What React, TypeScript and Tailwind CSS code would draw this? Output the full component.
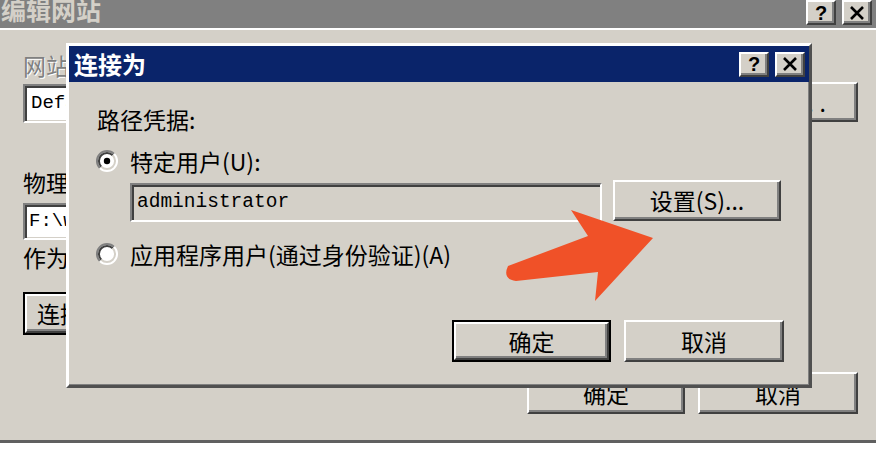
import React from 'react';

const font = { fontFamily: '"Noto Sans CJK SC", "Noto Sans", sans-serif' };

const raised =
  'border-2 border-t-white border-l-white border-r-[#404040] border-b-[#404040] shadow-[inset_-2px_-2px_0_#808080] bg-[#d4d0c8]';
const sunken =
  'border-2 border-t-[#808080] border-l-[#808080] border-r-white border-b-white shadow-[inset_2px_2px_0_#404040,inset_-1px_-1px_0_#d4d0c8]';

function Radio({ checked }: { checked?: boolean }) {
  return (
    <svg width="24" height="24" viewBox="0 0 24 24" className="shrink-0">
      <circle cx="12" cy="12" r="10" fill="white" />
      <path d="M4.9 19.1 A10 10 0 0 1 19.1 4.9" stroke="#808080" strokeWidth="2" fill="none" />
      <path d="M6.3 17.7 A8 8 0 0 1 17.7 6.3" stroke="#404040" strokeWidth="2" fill="none" />
      <path d="M19.1 4.9 A10 10 0 0 1 4.9 19.1" stroke="#ffffff" strokeWidth="2" fill="none" />
      <path d="M17.7 6.3 A8 8 0 0 1 6.3 17.7" stroke="#d4d0c8" strokeWidth="2" fill="none" />
      {checked && <circle cx="12" cy="12" r="3.2" fill="black" />}
    </svg>
  );
}

function TitleButton({ kind }: { kind: 'help' | 'close' }) {
  return (
    <div className={`w-[30px] h-[25px] flex items-center justify-center ${raised}`}>
      {kind === 'help' ? (
        <span className="text-[20px] font-bold leading-none text-black" style={{ fontFamily: '"Liberation Sans", sans-serif' }}>
          ?
        </span>
      ) : (
        <svg width="16" height="14" viewBox="0 0 16 14">
          <path d="M2 1 L14 13 M14 1 L2 13" stroke="black" strokeWidth="2.6" />
        </svg>
      )}
    </div>
  );
}

function Btn({ children, w, def, align = 'justify-center' }: { children: React.ReactNode; w: string; def?: boolean; align?: string }) {
  const inner = (
    <div className={`${raised} h-full w-full flex items-center ${align} text-[23px] text-black leading-none whitespace-nowrap overflow-hidden`}>
      {children}
    </div>
  );
  return def ? <div className={`${w} border-2 border-black`}>{inner}</div> : <div className={w}>{inner}</div>;
}

export default function App() {
  return (
    <div className="relative w-[876px] h-[462px] bg-white overflow-hidden" style={font}>
      {/* background window: 编辑网站 */}
      <div className="w-[876px] h-[443px] bg-[#d4d0c8] border-b-[3px] border-b-[#606060] flex flex-col">
        <div className="h-[28px] bg-[#808080] flex items-start justify-between pr-[4px]">
          <div className="text-[25px] font-bold leading-none text-[#d4d0c8] -mt-[3px] pl-[1px]">编辑网站</div>
          <div className="flex gap-[6px]">
            <TitleButton kind="help" />
            <TitleButton kind="close" />
          </div>
        </div>
        <div className="flex flex-col pl-[23px] pr-[18px] border-t-2 border-t-white">
          <div className="mt-[23px] h-[24px] text-[23px] leading-[24px] text-[#808080] [text-shadow:1px_1px_0_#fff]">网站名称(S):</div>
          <div className="mt-[5px] h-[41px] flex items-start">
            <div className={`w-[690px] mt-[2px] h-[39px] bg-white ${sunken} flex items-center pl-[6px] text-[19px]`} style={{ fontFamily: '"Liberation Mono", monospace' }}>
              Default Web Site
            </div>
            <div className="flex-1" />
            <Btn w="w-[90px] h-[40px]" align="justify-end pr-[24px]">
              <span className="tracking-[6px]">...</span>
            </Btn>
          </div>
          <div className="mt-[47px] h-[25px] text-[23px] leading-[25px] text-black">物理路径(P):</div>
          <div className={`w-[690px] mt-[8px] h-[37px] bg-white ${sunken} flex items-center pl-[4px] text-[19px]`} style={{ fontFamily: '"Liberation Mono", monospace' }}>
            F:\wwwroot
          </div>
          <div className="mt-[5px] h-[25px] text-[23px] leading-[25px] text-black">作为默认路径</div>
          <Btn w="mt-[22px] w-[104px] h-[43px]" def>
            <span className="w-full pl-[10px]">连接为(C)...</span>
          </Btn>
          <div className="mt-[37px] h-[42px] flex justify-end gap-[13px]">
            <Btn w="w-[158px] h-[42px]">确定</Btn>
            <Btn w="w-[160px] h-[42px]">取消</Btn>
          </div>
        </div>
      </div>

      {/* front dialog: 连接为 */}
      <div className="absolute left-[66px] top-[43px] w-[746px] h-[345px] bg-[#d4d0c8] border-[3px] border-t-white border-l-white border-r-[#505050] border-b-[#505050] shadow-[inset_-1px_-1px_0_#808080] flex flex-col">
        <div className="h-[36px] bg-[#0a246a] flex items-center justify-between pl-[5px] pr-[4px]">
          <div className="text-[24px] font-bold leading-none text-white">连接为</div>
          <div className="flex gap-[6px]">
            <TitleButton kind="help" />
            <TitleButton kind="close" />
          </div>
        </div>
        <div className="flex flex-col pl-[26px] pr-[25px]">
          <div className="mt-[25px] h-[24px] pl-[2px] text-[23px] leading-[24px] text-black">路径凭据:</div>
          <div className="mt-[18px] h-[24px] flex items-center gap-[11px] text-[23px] leading-[24px] text-black">
            <Radio checked />
            <span>特定用户(U):</span>
          </div>
          <div className="mt-[7px] h-[42px] flex items-start pl-[35px]">
            <div className={`w-[472px] mt-[3px] h-[39px] bg-[#d4d0c8] ${sunken} flex items-center pl-[5px] text-[19.5px] text-black`} style={{ fontFamily: '"Liberation Mono", monospace' }}>
              administrator
            </div>
            <Btn w="w-[168px] h-[41px] ml-[11px]">设置(S)...</Btn>
          </div>
          <div className="mt-[20px] h-[24px] flex items-center gap-[11px] text-[23px] leading-[24px] text-black">
            <Radio />
            <span>应用程序用户(通过身份验证)(A)</span>
          </div>
          <div className="mt-[54px] h-[42px] flex justify-end gap-[13px]">
            <Btn w="w-[159px] h-[42px]" def>确定</Btn>
            <Btn w="w-[160px] h-[42px]">取消</Btn>
          </div>
        </div>
      </div>

      {/* annotation arrow */}
      <svg className="absolute left-0 top-0 pointer-events-none" width="876" height="462" viewBox="0 0 876 462">
        <path d="M508 266 L588 236 L571 210 L653 238 L595 301 L598 272 L516 281 Q502 279 508 266 Z" fill="#f05128" />
      </svg>
    </div>
  );
}
